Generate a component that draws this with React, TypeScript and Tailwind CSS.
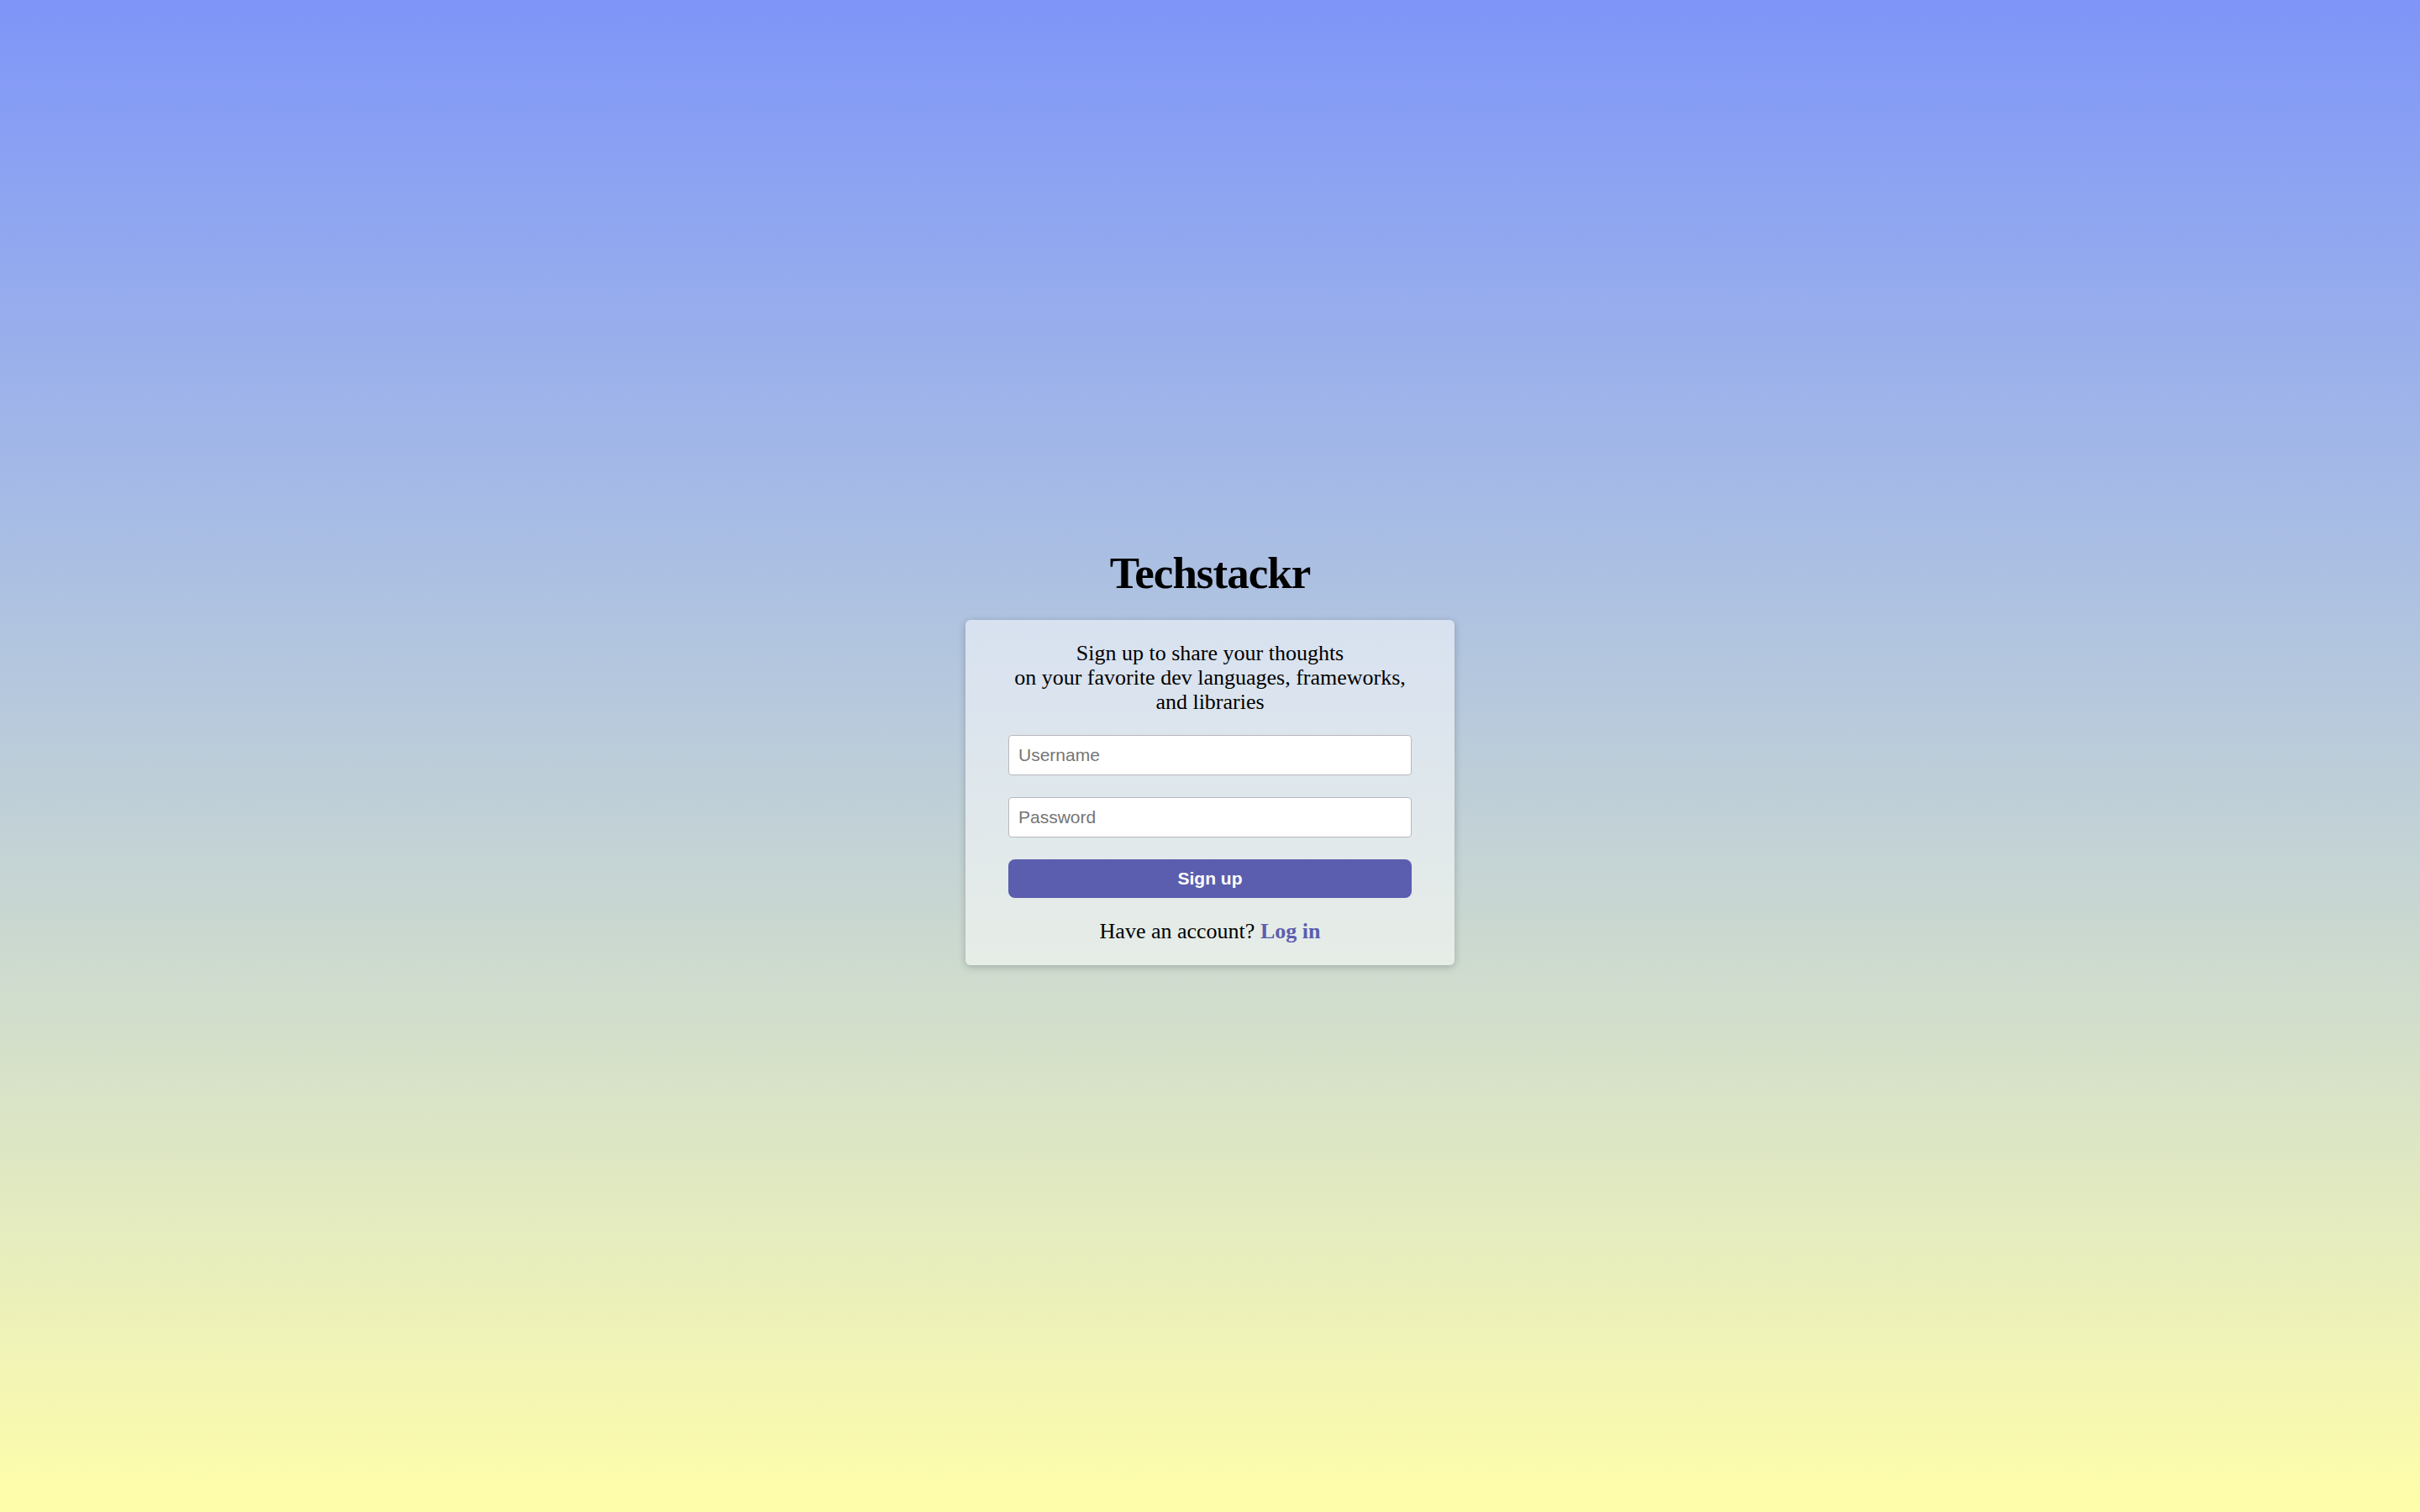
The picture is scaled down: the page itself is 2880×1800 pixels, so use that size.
import * as React from "react";
import { useState } from "react";

const SignupCard = () => {
  const [username, setUsername] = useState("");
  const [password, setPassword] = useState("");

  return (
    <div className="w-[582px] rounded-[6px] bg-white/50 px-[51px] pt-[25px] pb-[25px] shadow-[0_2px_10px_rgba(0,0,0,0.22)]">
      <p className="text-center font-['Liberation_Serif',serif] text-[26px] leading-[29px] text-black">
        Sign up to share your thoughts
        <br />
        on your favorite dev languages, frameworks,
        <br />
        and libraries
      </p>
      <div className="mt-[25px] flex flex-col gap-[26px]">
        <input
          type="text"
          value={username}
          onChange={(e) => setUsername(e.target.value)}
          placeholder="Username"
          className="h-[48px] w-full rounded-[4px] border border-[#b8b8bc] bg-white px-[11px] font-['Liberation_Sans',Arial,sans-serif] text-[21px] text-black outline-none placeholder:text-[#757575]"
        />
        <input
          type="password"
          value={password}
          onChange={(e) => setPassword(e.target.value)}
          placeholder="Password"
          className="h-[48px] w-full rounded-[4px] border border-[#b8b8bc] bg-white px-[11px] font-['Liberation_Sans',Arial,sans-serif] text-[21px] text-black outline-none placeholder:text-[#757575]"
        />
        <button className="h-[46px] w-full rounded-[8px] bg-[#5b5eae] font-['Liberation_Sans',Arial,sans-serif] text-[21px] font-bold text-white">
          Sign up
        </button>
      </div>
      <p className="mt-[25px] text-center font-['Liberation_Serif',serif] text-[26px] leading-[30px] text-black">
        Have an account?{" "}
        <a href="#" className="font-bold text-[#5b5eae]">
          Log in
        </a>
      </p>
    </div>
  );
};

export default function App() {
  return (
    <div className="flex min-h-screen w-full flex-col items-center justify-center bg-linear-to-b from-[#7f95f8] to-[#fffea9]">
      <h1 className="mb-[26px] font-['Liberation_Serif',serif] text-[53px] leading-[60px] font-bold tracking-[-1px] text-black">
        Techstackr
      </h1>
      <SignupCard />
    </div>
  );
}
